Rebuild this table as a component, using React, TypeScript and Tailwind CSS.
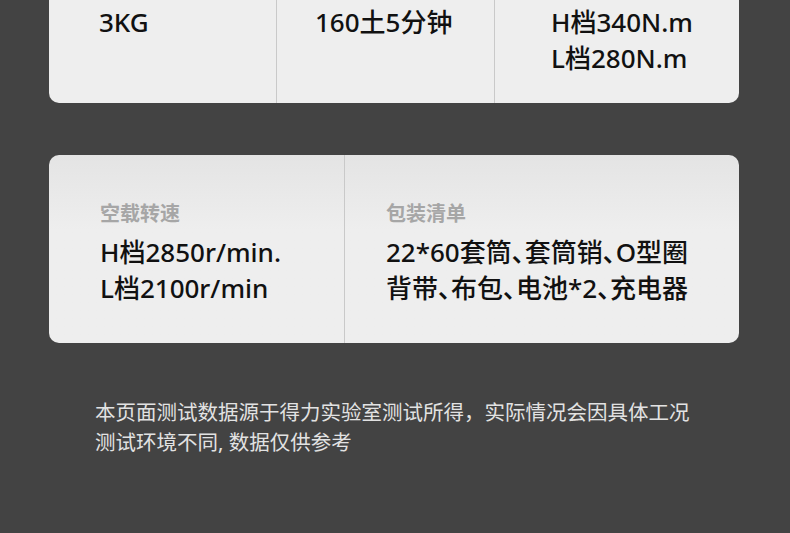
const font = { fontFamily: '"Noto Sans", "Noto Sans CJK SC", sans-serif' }

function Card({ children, className }: { children: React.ReactNode; className?: string }) {
  return (
    <div className={"ml-[49px] mr-[51px] flex rounded-[10px] bg-gradient-to-b from-[#e4e4e4] from-0% via-[#eeeeee] via-40% to-[#eeeeee] " + (className ?? "")}>
      {children}
    </div>
  )
}

const value = "text-[26px] font-medium leading-[36px] text-[#111] [font-feature-settings:'palt']"

export default function App() {
  return (
    <div className="h-[533px] w-[790px] overflow-hidden bg-[#434343]" style={font}>
      <Card className="-mt-[60px] h-[163px] !bg-none !bg-[#eeeeee]">
        <div className={"w-[227px] pl-[50px] pt-[64px] " + value}>3KG</div>
        <div className={"w-[218px] border-l border-[#c9c9c9] pl-[38px] pt-[64px] " + value}>
          160土5分钟
        </div>
        <div className={"flex-1 border-l border-[#c9c9c9] pl-[56px] pt-[64px] " + value}>
          <div>H档340N.m</div>
          <div>L档280N.m</div>
        </div>
      </Card>

      <Card className="mt-[52px] h-[188px]">
        <div className="w-[295px] pl-[51px] pt-[46px]">
          <div className="text-[20px] font-bold leading-[26px] text-[#a6a6a6]">空载转速</div>
          <div className={"mt-[7px] " + value}>
            <div>H档2850r/min.</div>
            <div>L档2100r/min</div>
          </div>
        </div>
        <div className="flex-1 border-l border-[#c9c9c9] pl-[41px] pt-[46px]">
          <div className="text-[20px] font-bold leading-[26px] text-[#a6a6a6]">包装清单</div>
          <div className={"mt-[7px] " + value}>
            <div>22*60套筒、套筒销、O型圈</div>
            <div>背带、布包、电池*2、充电器</div>
          </div>
        </div>
      </Card>

      <div className="mt-[54px] pl-[95px] text-[20.5px] leading-[30px] text-[#e2e2e2]">
        <div>本页面测试数据源于得力实验室测试所得，实际情况会因具体工况</div>
        <div>测试环境不同, 数据仅供参考</div>
      </div>
    </div>
  )
}
